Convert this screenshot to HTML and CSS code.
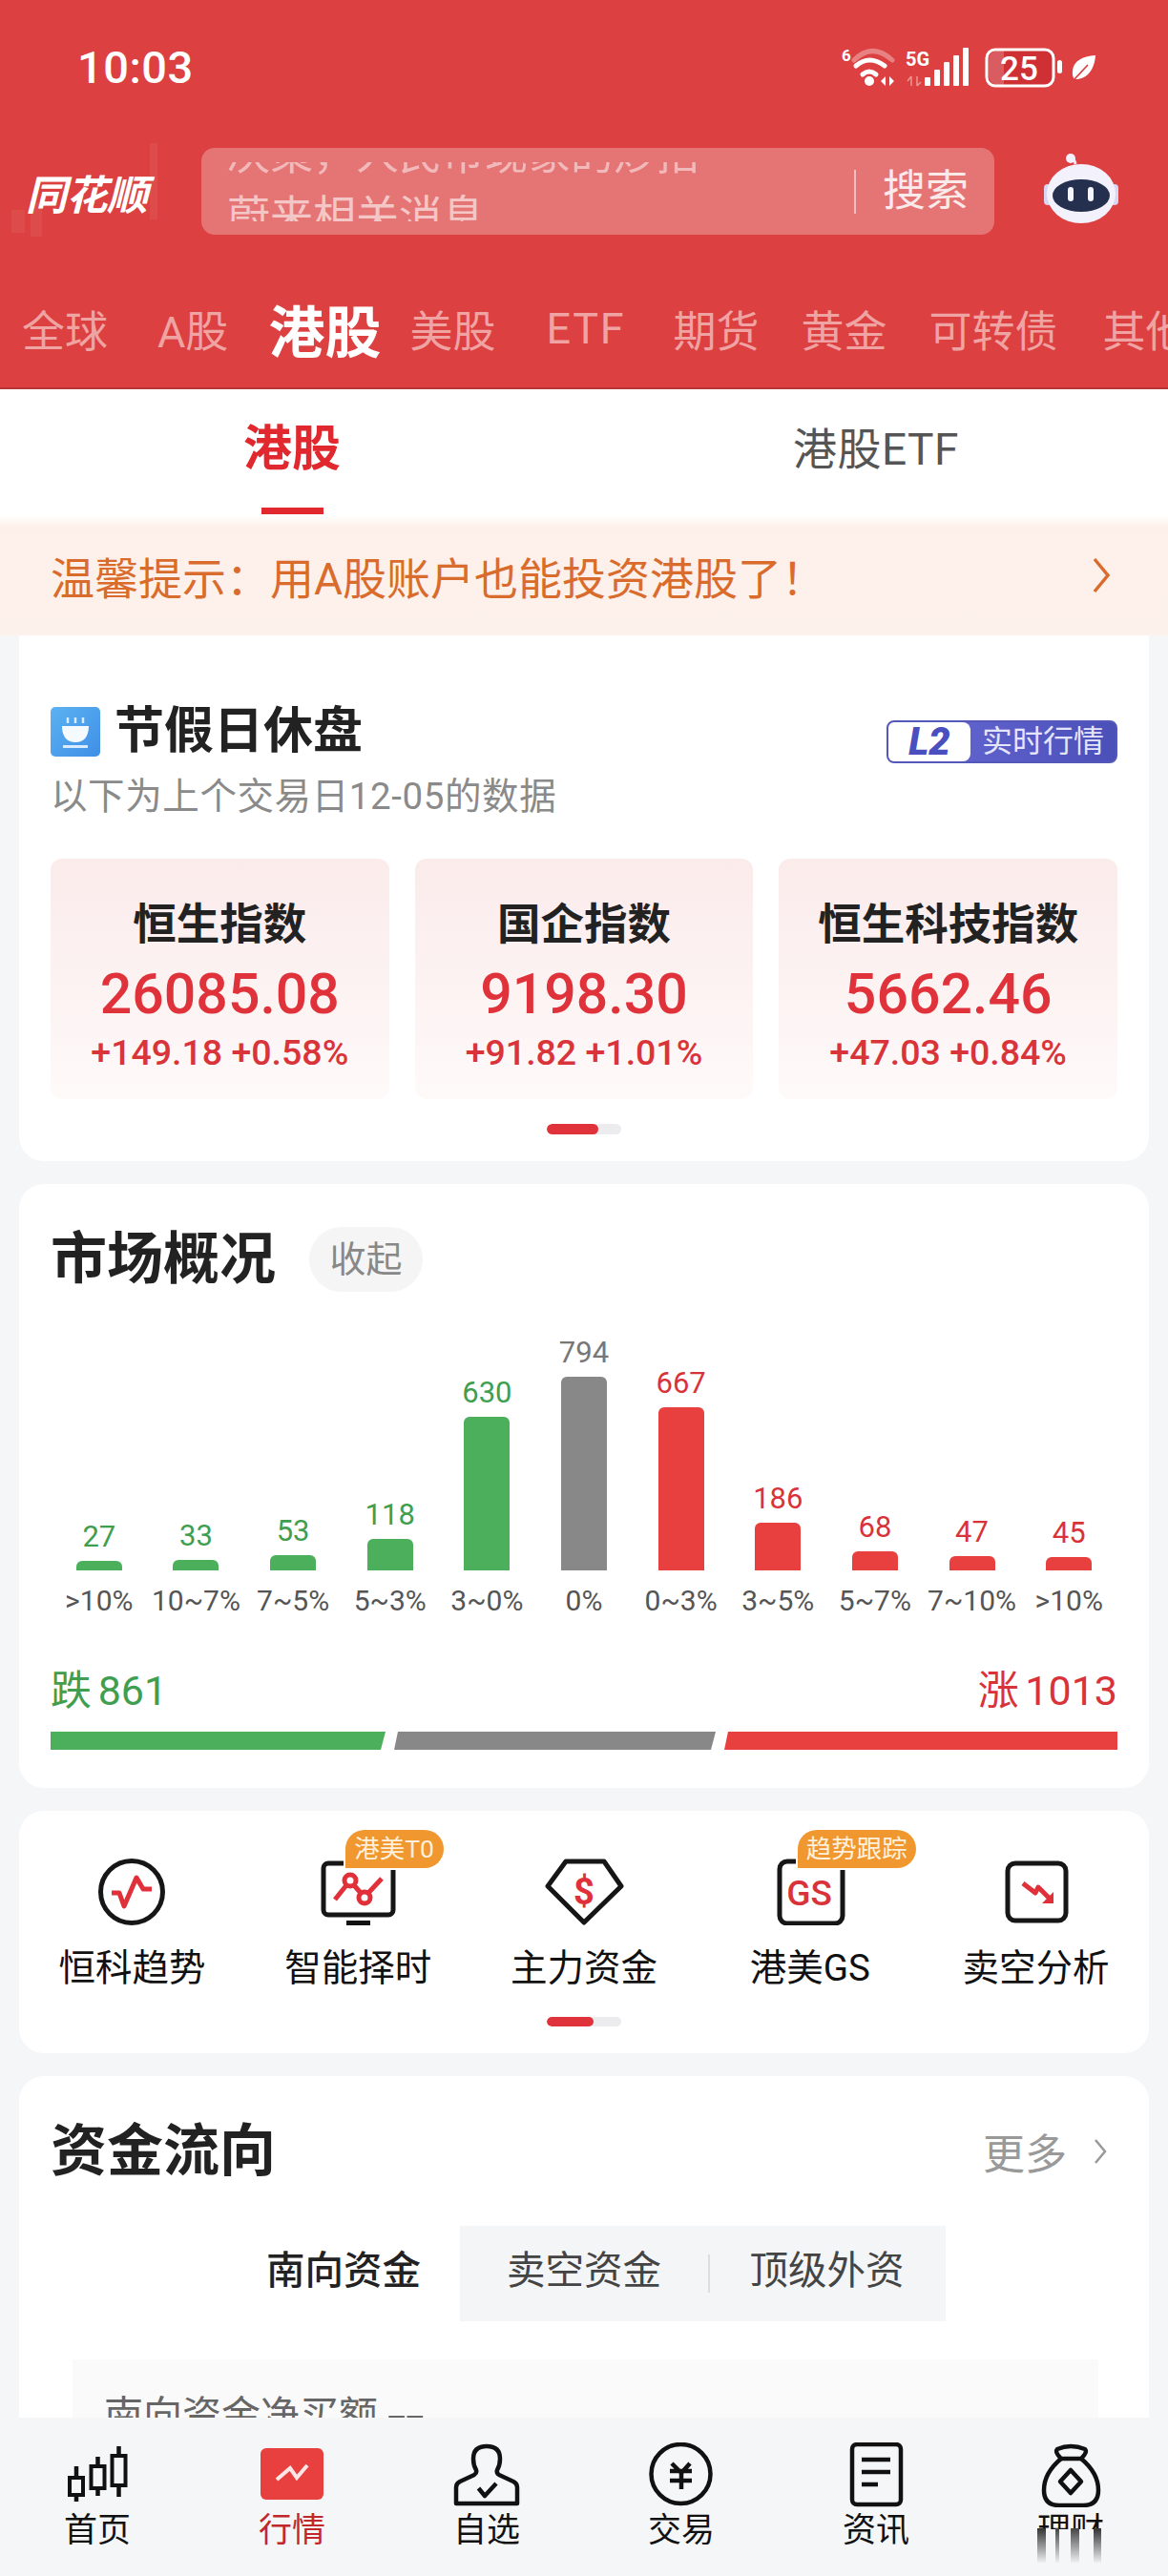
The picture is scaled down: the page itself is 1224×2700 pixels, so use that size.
FILE: index.html
```html
<!DOCTYPE html>
<html lang="zh-CN">
<head>
<meta charset="utf-8">
<title>同花顺 行情</title>
<link rel="stylesheet" href="styles.css">
</head>
<body>
<div class="app">
  <header class="head">
    <div class="status">
      <span class="time">10:03</span>
      <svg class="status-icons" viewBox="882 48 266 44" width="266" height="44">
        <text x="882" y="64" class="st-6">6</text>
        <path d="M895 63Q914 44 935 63" class="wifi-faint"/>
        <path d="M897 69Q911 57 927 69" class="wifi"/>
        <path d="M904 78Q911 72 918 78" class="wifi"/>
        <circle cx="911" cy="85" r="5" fill="#fff"/>
        <path d="M928 80v10l-5-5zM932 80v10l5-5z" fill="#fff"/>
        <text x="949" y="69" class="st-5g">5G</text>
        <path d="M955 80v10M955 80l-4 5M961 90v-10M961 90l4-4" class="faint-arrows"/>
        <g fill="#fff">
          <rect x="969" y="81" width="6" height="9" rx="1"/>
          <rect x="979" y="73" width="6" height="17" rx="1"/>
          <rect x="989" y="65" width="6" height="25" rx="1"/>
          <rect x="999" y="58" width="6" height="32" rx="1"/>
          <rect x="1009" y="50" width="6" height="40" rx="1"/>
        </g>
        <rect x="1034" y="52" width="70" height="38" rx="9" class="bat-fill"/>
        <path d="M1036 62a9 9 0 0 1 9-9h7v36h-7a9 9 0 0 1-9-9z" fill="rgba(255,255,255,.22)"/>
        <rect x="1034" y="52" width="70" height="38" rx="9" class="bat"/>
        <rect x="1108" y="63" width="5" height="14" rx="2.5" fill="#fff"/>
        <text x="1068" y="84" class="st-25">25</text>
        <path d="M1148 58C1134 59 1125 64 1124 74C1123.600 78 1124 81 1126 83C1138 84 1147 74 1148 58Z" fill="#fff"/>
        <path d="M1126 83L1140 68" stroke="#dc4040" stroke-width="1.800" fill="none"/>
      </svg>
    </div>
    <div class="searchrow">
      <div class="logo">
        <svg class="logo-bg" viewBox="0 0 160 110" width="160" height="110">
          <rect x="0" y="70" width="14" height="24" fill="#fff"/>
          <rect x="20" y="62" width="12" height="36" fill="#fff"/>
          <rect x="145" y="0" width="8" height="80" fill="#fff"/>
        </svg>
        <span class="logo-text">同花顺</span>
      </div>
      <div class="search">
        <div class="ticker">
          <div class="ticker-line first">决策，人民币现象的炒招</div>
          <div class="ticker-line">蔚来相关消息</div>
        </div>
        <span class="search-div"></span>
        <span class="search-btn">搜索</span>
      </div>
      <svg class="robot" viewBox="1090 160 86 76" width="86" height="76">
        <path d="M1127 172Q1126 166 1122 166" stroke="#e8e4f8" stroke-width="3" fill="none"/>
        <circle cx="1122" cy="166" r="5" fill="#f4f0fb"/>
        <rect x="1094" y="193" width="8" height="22" rx="4" fill="#d9d6f2"/>
        <rect x="1164" y="193" width="8" height="22" rx="4" fill="#d9d6f2"/>
        <ellipse cx="1133" cy="203" rx="36" ry="31" fill="#f3f1fb"/>
        <ellipse cx="1133" cy="205" rx="30" ry="17" fill="#25304f"/>
        <rect x="1119" y="196" width="6" height="15" rx="3" fill="#f4f5fb"/>
        <rect x="1140" y="196" width="6" height="15" rx="3" fill="#f4f5fb"/>
      </svg>
    </div>
    <nav class="mkt">
      <span class="mkt-item">全球</span>
      <span class="mkt-item mkt-a">A股</span>
      <span class="mkt-item mkt-on">港股</span>
      <span class="mkt-item">美股</span>
      <span class="mkt-item mkt-etf">ETF</span>
      <span class="mkt-item mkt-tight">期货</span>
      <span class="mkt-item mkt-tight">黄金</span>
      <span class="mkt-item">可转债</span>
      <span class="mkt-item">其他</span>
    </nav>
  </header>

  <main class="main">
    <div class="subtabs">
      <div class="subtab on"><span>港股</span><i class="subtab-bar"></i></div>
      <div class="subtab"><span>港股ETF</span></div>
    </div>
    <div class="notice">
      <span>温馨提示：用A股账户也能投资港股了！</span>
      <svg viewBox="0 0 20 38" width="20" height="38"><path d="M3 2L17 19L3 36" class="notice-chev"/></svg>
    </div>

    <div class="cards">
      <section class="card card-index">
        <div class="idx-head">
          <div class="idx-title">
            <svg class="cup" viewBox="0 0 52 52" width="52" height="52">
              <defs><linearGradient id="cupbg" x1="0" y1="0" x2="1" y2="1"><stop offset="0" stop-color="#5cb2f2"/><stop offset="1" stop-color="#3f8fe6"/></linearGradient></defs>
              <rect width="52" height="52" rx="5" fill="url(#cupbg)"/>
              <path d="M18 11v6M26 11v6M34 11v6" stroke="#d8ecfb" stroke-width="2.500"/>
              <path d="M12 20H40C40 31 35 37 26 37C17 37 12 31 12 20Z" fill="#f4fafe"/>
              <rect x="13" y="40" width="26" height="3" fill="#d8ecfb"/>
            </svg>
            <h2 class="h-md">节假日休盘</h2>
          </div>
          <div class="l2"><span class="l2-l">L2</span><span class="l2-r">实时行情</span></div>
        </div>
        <p class="idx-sub">以下为上个交易日12-05的数据</p>
        <div class="tiles">
          <div class="tile"><div class="tile-name">恒生指数</div><div class="tile-price">26085.08</div><div class="tile-chg">+149.18 +0.58%</div></div>
          <div class="tile"><div class="tile-name">国企指数</div><div class="tile-price">9198.30</div><div class="tile-chg">+91.82 +1.01%</div></div>
          <div class="tile"><div class="tile-name">恒生科技指数</div><div class="tile-price">5662.46</div><div class="tile-chg">+47.03 +0.84%</div></div>
        </div>
        <div class="dots dots-idx"><i class="dot-on"></i></div>
      </section>

      <section class="card card-market">
        <div class="mk-head">
          <h2 class="h-lg">市场概况</h2>
          <span class="pill">收起</span>
        </div>
        <div class="chart">
          <div class="col g"><span class="val">27</span><i class="bar" style="height:10px"></i><span class="lab">&gt;10%</span></div>
          <div class="col g"><span class="val">33</span><i class="bar" style="height:11px"></i><span class="lab">10~7%</span></div>
          <div class="col g"><span class="val">53</span><i class="bar" style="height:16px"></i><span class="lab">7~5%</span></div>
          <div class="col g"><span class="val">118</span><i class="bar" style="height:33px"></i><span class="lab">5~3%</span></div>
          <div class="col g"><span class="val">630</span><i class="bar" style="height:161px"></i><span class="lab">3~0%</span></div>
          <div class="col n"><span class="val">794</span><i class="bar" style="height:203px"></i><span class="lab">0%</span></div>
          <div class="col r"><span class="val">667</span><i class="bar" style="height:171px"></i><span class="lab">0~3%</span></div>
          <div class="col r"><span class="val">186</span><i class="bar" style="height:50px"></i><span class="lab">3~5%</span></div>
          <div class="col r"><span class="val">68</span><i class="bar" style="height:20px"></i><span class="lab">5~7%</span></div>
          <div class="col r"><span class="val">47</span><i class="bar" style="height:15px"></i><span class="lab">7~10%</span></div>
          <div class="col r"><span class="val">45</span><i class="bar" style="height:14px"></i><span class="lab">&gt;10%</span></div>
        </div>
        <div class="counts"><span class="cnt-down">跌 861</span><span class="cnt-up">涨 1013</span></div>
        <div class="split"><i class="sp-g"></i><i class="sp-n"></i><i class="sp-r"></i></div>
      </section>

      <section class="card card-tools">
        <div class="tools">
          <div class="tool">
            <div class="tool-ico">
              <svg viewBox="0 0 90 70" width="90" height="70">
                <circle cx="45" cy="35" r="32.500" class="ln"/>
                <path d="M24 36H32L37 50L50 20L57 32H66" class="rd"/>
              </svg>
            </div>
            <span class="tool-lab">恒科趋势</span>
          </div>
          <div class="tool">
            <div class="tool-ico">
              <svg viewBox="0 0 90 70" width="90" height="70">
                <rect x="9" y="5" width="73" height="54" rx="5" class="ln"/>
                <rect x="33" y="65" width="25" height="5" fill="#111"/>
                <path d="M21 43L33 28M41 28L48 36M56 36L70 21" class="rd"/>
                <circle cx="37" cy="23" r="6" class="rd"/>
                <circle cx="52" cy="41" r="6" class="rd"/>
              </svg>
              <span class="tag tag-a">港美T0</span>
            </div>
            <span class="tool-lab">智能择时</span>
          </div>
          <div class="tool">
            <div class="tool-ico">
              <svg viewBox="0 0 90 70" width="90" height="70">
                <path d="M26 3H66L84 29L45 67L7 29Z" class="ln"/>
                <text x="45" y="48" class="dollar">$</text>
              </svg>
            </div>
            <span class="tool-lab">主力资金</span>
          </div>
          <div class="tool">
            <div class="tool-ico">
              <svg viewBox="0 0 90 70" width="90" height="70">
                <rect x="13" y="3" width="66" height="65" rx="8" class="ln"/>
                <text x="44" y="49" class="gs">GS</text>
              </svg>
              <span class="tag tag-b">趋势跟踪</span>
            </div>
            <span class="tool-lab">港美GS</span>
          </div>
          <div class="tool">
            <div class="tool-ico">
              <svg viewBox="0 0 90 70" width="90" height="70">
                <rect x="15" y="5" width="61" height="60" rx="8" class="ln"/>
                <path d="M31 26L44 36L47 30L58 41" class="rd"/>
                <path d="M63 35V47H51Z" fill="#e0303a"/>
              </svg>
            </div>
            <span class="tool-lab">卖空分析</span>
          </div>
        </div>
        <div class="dots dots-tool"><i class="dot-on"></i></div>
      </section>

      <section class="card card-flow">
        <div class="fl-head">
          <h2 class="h-lg">资金流向</h2>
          <span class="more">更多
            <svg viewBox="0 0 14 28" width="14" height="28"><path d="M2 2L12 14L2 26" class="more-chev"/></svg>
          </span>
        </div>
        <div class="seg">
          <span class="seg-on">南向资金</span>
          <span>卖空资金</span>
          <span class="seg-last">顶级外资</span>
        </div>
        <div class="panel">南向资金净买额 <span class="dash">--</span></div>
      </section>
    </div>
  </main>

  <footer class="nav">
    <div class="nav-item">
      <svg viewBox="0 0 80 68" width="80" height="68">
        <path d="M18 25V62M40.500 15V56M62.500 4V57" class="nl"/>
        <rect x="11" y="37" width="14" height="18" class="nb"/>
        <rect x="33.500" y="25" width="14" height="23" class="nb"/>
        <rect x="55.500" y="14" width="14" height="31" class="nb"/>
      </svg>
      <span class="nav-lab">首页</span>
    </div>
    <div class="nav-item on">
      <svg viewBox="0 0 80 68" width="80" height="68">
        <rect x="7" y="6" width="66" height="54" rx="6" fill="#e8403f"/>
        <path d="M24 39L38 27L45 37L56 24" stroke="#fde6e6" stroke-width="4" fill="none"/>
      </svg>
      <span class="nav-lab">行情</span>
    </div>
    <div class="nav-item">
      <svg viewBox="0 0 80 68" width="80" height="68">
        <path d="M8 64V47Q8 43 12 41L27 34Q30 32 29 29Q26 24 26 17Q26 4 40 4Q54 4 54 17Q54 24 51 29Q50 32 53 34L68 41Q72 43 72 47V64Z" class="nl"/>
        <path d="M31.500 48L38 56L50 43" class="nl"/>
      </svg>
      <span class="nav-lab">自选</span>
    </div>
    <div class="nav-item">
      <svg viewBox="0 0 80 68" width="80" height="68">
        <ellipse cx="39.500" cy="33" rx="31" ry="31" class="nl"/>
        <path d="M30 22L40 32L49 22M28 30H51M28 40H51M40 32V49" class="nl"/>
      </svg>
      <span class="nav-lab">交易</span>
    </div>
    <div class="nav-item">
      <svg viewBox="0 0 80 68" width="80" height="68">
        <rect x="15" y="2" width="51" height="63" rx="5" class="nl"/>
        <path d="M25 18H55M25 31H55M25 44H42" class="nl"/>
      </svg>
      <span class="nav-lab">资讯</span>
    </div>
    <div class="nav-item smear">
      <svg viewBox="0 0 80 68" width="80" height="68">
        <path d="M30 17Q23 10 26 7Q40 1 55 7Q58 10 51 17Z" class="nl"/>
        <path d="M30 17Q12 32 12 50Q12 66 28 66H53Q69 66 69 50Q69 32 51 17" class="nl"/>
        <path d="M40 29L51 41L40 53L29 41Z" class="nl"/>
      </svg>
      <span class="nav-lab clip">理财</span>
    </div>
  </footer>
</div>
</body>
</html>
```
FILE: styles.css
```css
* { box-sizing: border-box; }
html, body { margin: 0; padding: 0; }
body { font-family: Roboto, "Noto Sans CJK SC", sans-serif; background: #f5f6f8; }
h2, p { margin: 0; }
i { display: block; font-style: normal; }

.app { width: 1224px; height: 2700px; overflow: hidden; display: flex; flex-direction: column; }

/* header */
.head { height: 408px; flex: none; background: #dc4040; border-bottom: 2px solid #b83535; overflow: hidden; color: #fff; }
.status { height: 140px; padding: 0 76px 0 81px; display: flex; align-items: center; justify-content: space-between; }
.time { font-size: 47px; font-weight: 500; letter-spacing: .5px; }
.status-icons { display: block; }
.st-6 { font: 700 17px Roboto, sans-serif; fill: #fff; }
.st-5g { font: 700 20px "Roboto", sans-serif; fill: #fff; }
.st-25 { font: 500 35px Roboto, sans-serif; fill: #fff; text-anchor: middle; }
.wifi, .wifi-faint { fill: none; stroke-width: 5; stroke-linecap: round; stroke: #fff; }
.wifi-faint { stroke: rgba(255,255,255,.35); }
.faint-arrows { fill: none; stroke: rgba(255,255,255,.45); stroke-width: 1.500; }
.bat { fill: none; stroke: #fff; stroke-width: 3; }
.bat-fill { fill: #cf3034; }

.searchrow { height: 91px; margin-top: 15px; display: flex; align-items: center; padding-left: 27px; }
.logo { width: 184px; flex: none; position: relative; display: flex; align-items: center; height: 91px; }
.logo-bg { position: absolute; left: -15px; top: -5px; opacity: .06; }
.logo-text { position: relative; font-size: 43px; font-weight: 700; font-style: italic; letter-spacing: -.5px; }
.search { width: 831px; height: 91px; flex: none; border-radius: 14px; background: rgba(255,255,255,.28); display: flex; align-items: center; padding: 0 27px; }
.ticker { flex: 1; min-width: 0; height: 62px; overflow: hidden; font-size: 45px; line-height: 65px; color: rgba(255,255,255,.62); }
.ticker-line { white-space: nowrap; }
.ticker-line.first { margin-top: -40px; opacity: .8; }
.search-div { width: 2px; height: 46px; background: rgba(255,255,255,.55); flex: none; }
.search-btn { margin-left: 28px; font-size: 45px; line-height: 50px; color: #fbeaea; flex: none; }
.robot { flex: none; margin-left: 48px; margin-bottom: 5px; }

.mkt { height: 160px; padding: 36px 0 0 23px; display: flex; align-items: center; white-space: nowrap; font-size: 45px; color: #f0a3a3; }
.mkt-item { flex: none; margin-right: 47px; }
.mkt-a { margin-left: 5px; margin-right: 43px; }
.mkt-on { font-size: 59px; font-weight: 700; color: #fff; margin-left: -1px; margin-right: 30px; }
.mkt-etf { margin-left: 6px; margin-right: 50px; letter-spacing: 1.800px; }
.mkt-tight { margin-right: 44px; }

/* main */
.main { height: 2126px; flex: none; overflow: hidden; }
.subtabs { height: 132px; background: #fff; display: grid; grid-template-columns: 1fr 1fr; }
.subtab { display: flex; flex-direction: column; align-items: center; padding-top: 33px; font-size: 46px; line-height: 60px; color: #555; letter-spacing: .5px; }
.subtab.on { font-size: 51px; font-weight: 700; color: #e0282e; letter-spacing: 0; }
.subtab-bar { width: 65px; height: 7px; margin-top: 31px; background: #e0282e; }
.notice { height: 126px; padding: 0 60px 0 53px; display: flex; align-items: center; justify-content: space-between; background: linear-gradient(#fff 0, #fdf0ea 12px, #fdf1eb 100%); font-size: 46px; color: #d96c2c; }
.notice-chev { fill: none; stroke: #d96c2c; stroke-width: 3.500; }

.cards { display: flex; flex-direction: column; gap: 24px; padding: 0 20px; }
.card { background: #fff; border-radius: 26px; }
.h-md { font-size: 52px; line-height: 52px; font-weight: 700; color: #222; }
.h-lg { font-size: 59px; line-height: 68px; font-weight: 700; color: #222; }

/* index card */
.card-index { padding: 75px 33px 28px; border-radius: 0 0 26px 26px; }
.idx-head { display: flex; justify-content: space-between; align-items: flex-start; }
.idx-title { display: flex; align-items: center; gap: 15px; }
.cup { display: block; flex: none; }
.l2 { width: 242px; height: 45px; margin-top: 14px; display: flex; border: 2px solid #5458b8; border-radius: 8px; background: linear-gradient(90deg, #6a6cd6, #4b4fb8); overflow: hidden; }
.l2-l { width: 86px; background: #fff; border-radius: 0 8px 8px 0; color: #4a4fbf; font-size: 40px; line-height: 41px; font-weight: 900; font-style: italic; text-align: center; }
.l2-r { flex: 1; text-align: center; color: #e4e5fb; font-size: 32px; line-height: 41px; }
.idx-sub { margin-top: 11px; font-size: 38.500px; line-height: 48px; color: #8a8a8a; letter-spacing: .6px; }
.tiles { margin-top: 41px; display: grid; grid-template-columns: repeat(3, 1fr); gap: 27px; }
.tile { height: 252px; border-radius: 12px; padding-top: 42px; text-align: center; background: linear-gradient(#fbebeb, #fdf4f4 65%, #fffafa); }
.tile-name { font-size: 45.500px; line-height: 56px; font-weight: 700; color: #222; }
.tile-price { margin-top: 9px; font-size: 59px; line-height: 70px; font-weight: 500; color: #e0323a; }
.tile-chg { margin-top: 4px; font-size: 37.500px; line-height: 44px; font-weight: 500; color: #d8343a; white-space: nowrap; }

.dots { width: 78px; margin: 0 auto; background: #ececee; border-radius: 6px; overflow: hidden; }
.dots-idx { height: 11px; margin-top: 26px; }
.dots-idx .dot-on { width: 54px; height: 11px; background: #e0323a; border-radius: 6px; }
.dots-tool { height: 10px; margin-top: 27px; }
.dots-tool .dot-on { width: 49px; height: 10px; background: #e0323a; border-radius: 6px; }

/* market */
.card-market { padding: 45px 33px 40px; }
.mk-head { display: flex; align-items: center; gap: 35px; height: 68px; }
.pill { width: 119px; height: 68px; border-radius: 34px; background: #f5f5f5; color: #888; font-size: 38px; line-height: 68px; text-align: center; }
.chart { margin-top: 45px; display: grid; grid-template-columns: repeat(11, 1fr); align-items: end; }
.col { display: flex; flex-direction: column; align-items: center; }
.val { font-size: 31px; line-height: 38px; margin-bottom: 6px; }
.bar { width: 48px; border-radius: 6px 6px 0 0; }
.lab { margin-top: 12px; font-size: 30px; line-height: 40px; color: #555; white-space: nowrap; }
.g .val { color: #3f9e4f; } .g .bar { background: #4caf5c; }
.n .val { color: #777; } .n .bar { background: #888; }
.r .val { color: #d9333a; } .r .bar { background: #e8403f; }
.counts { margin-top: 48px; display: flex; justify-content: space-between; font-size: 43px; line-height: 52px; word-spacing: -4px; }
.cnt-down { color: #3f9e4f; }
.cnt-up { color: #d9333a; }
.split { margin-top: 17px; display: flex; gap: 9px; height: 19px; }
.sp-g { width: 351px; flex: none; background: #4caf5c; clip-path: polygon(0 0, 100% 0, calc(100% - 5px) 100%, 0 100%); }
.sp-n { width: 337px; flex: none; background: #888; clip-path: polygon(4px 0, 100% 0, calc(100% - 5px) 100%, 0 100%); }
.sp-r { flex: 1; background: #e8403f; clip-path: polygon(4px 0, 100% 0, 100% 100%, 0 100%); }

/* tools */
.card-tools { padding: 50px 0 28px; }
.tools { display: grid; grid-template-columns: repeat(5, 1fr); }
.tool { display: flex; flex-direction: column; align-items: center; }
.tool-ico { width: 90px; height: 70px; position: relative; }
.tool-ico svg { display: block; }
.ln { fill: none; stroke: #161616; stroke-width: 5; stroke-linejoin: round; }
.rd { fill: none; stroke: #e0303a; stroke-width: 5; stroke-linejoin: round; }
.dollar { font: 700 38px Roboto, sans-serif; fill: #e0303a; text-anchor: middle; }
.gs { font: 500 37px Roboto, sans-serif; fill: #d9333a; text-anchor: middle; }
.tool-lab { margin-top: 21px; font-size: 38.500px; line-height: 48px; color: #111; white-space: nowrap; }
.tag { position: absolute; left: 32px; top: -30px; height: 40px; padding: 0 9px; border-radius: 20px 20px 20px 0; background: #f0982f; box-shadow: 0 0 0 2px #fff; color: #fdf0dd; font-size: 26.500px; line-height: 40px; white-space: nowrap; }
.tag-a { width: 103px; }
.tag-b { width: 124px; }

/* flow */
.card-flow { padding: 45px 33px 0; border-radius: 26px 26px 0 0; height: 400px; }
.fl-head { display: flex; align-items: center; justify-content: space-between; }
.more { display: flex; align-items: center; gap: 28px; margin-right: 11px; font-size: 44px; color: #999; }
.more-chev { fill: none; stroke: #999; stroke-width: 2.500; }
.more svg { display: block; }
.seg { margin: 44px 0 0 185px; width: 753px; height: 100px; display: grid; grid-template-columns: 244px 260px 249px; background: #f4f5f7; font-size: 40.500px; color: #444; text-align: center; line-height: 94px; }
.seg-on { background: #fff; color: #222; font-weight: 500; }
.seg-last { background: linear-gradient(#ddd, #ddd) no-repeat 0 30px / 2px 40px; }
.panel { margin: 40px 20px 0 23px; height: 160px; padding: 35px 0 0 33px; background: #fafafb; font-size: 41px; line-height: 48px; color: #666; }
.dash { display: inline-block; transform: scaleX(1.700); transform-origin: left center; }

/* nav */
.nav { height: 166px; flex: none; padding-top: 26px; background: #f5f6f8; display: grid; grid-template-columns: repeat(6, 204px); }
.nav-item { display: flex; flex-direction: column; align-items: center; position: relative; }
.nav-item svg { display: block; flex: none; }
.nav-lab { margin-top: 5px; font-size: 35px; line-height: 40px; color: #111; }
.nav-item.on .nav-lab { color: #c0282d; }
.nl { fill: none; stroke: #111; stroke-width: 4.500; stroke-linejoin: round; }
.nb { fill: #f5f6f8; stroke: #111; stroke-width: 4; }
.clip { height: 18px; overflow: hidden; }
.smear::after { content: ""; position: absolute; left: 67px; top: 90px; width: 67px; height: 37px; background: linear-gradient(90deg, #333 0 13%, transparent 13% 28%, #444 28% 34%, transparent 34% 52%, #444 52% 66%, transparent 66% 88%, #333 88% 100%); -webkit-mask-image: linear-gradient(#000, transparent); mask-image: linear-gradient(#000, transparent); }
```
